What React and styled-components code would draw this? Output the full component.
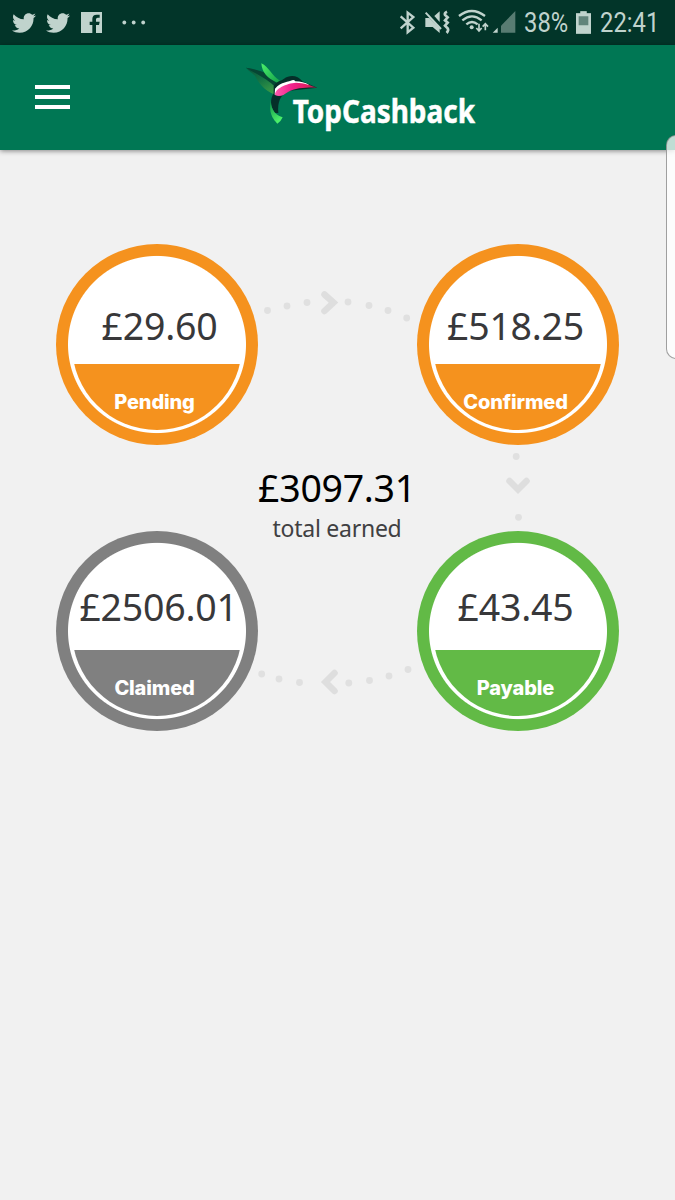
import { FaTwitter } from 'react-icons/fa';
import styled, { createGlobalStyle } from 'styled-components';

const stages = {
  pending: { label: 'Pending', amount: '£29.60', color: '#f5921e' },
  confirmed: { label: 'Confirmed', amount: '£518.25', color: '#f5921e' },
  claimed: { label: 'Claimed', amount: '£2506.01', color: '#808080' },
  payable: { label: 'Payable', amount: '£43.45', color: '#62ba46' },
};

export default function App() {
  return (
    <Screen>
      <GlobalStyle />
      <StatusBar />
      <Header>
        <MenuButton aria-label="Menu">
          <span />
          <span />
          <span />
        </MenuButton>
        <Logo />
      </Header>
      <Overview>
        <Stage {...stages.pending} shift={2.5} drop={-1} />
        <ArrowRight />
        <Stage {...stages.confirmed} shift={-2.5} drop={-1} />

        <span />
        <Total>
          <strong>£3097.31</strong>
          <p>total earned</p>
        </Total>
        <ArrowDown />

        <Stage {...stages.claimed} shift={1.5} drop={-6} />
        <ArrowLeft />
        <Stage {...stages.payable} shift={-2.5} drop={-6} />
      </Overview>
      <EdgeHandle />
    </Screen>
  );
}

function StatusBar() {
  return (
    <StatusWrapper>
      <Notifications>
        <FaTwitter size={24} />
        <FaTwitter size={24} />
        <svg width="21" height="21" viewBox="0 0 63 63" fill="currentColor">
          <path d="M0 0H63V63H45V39H54L56 29H45V22Q45 17 50 17H56V8H47Q34 8 34 21V29H26V39H34V63H0Z" />
        </svg>
        <svg width="24" height="5" viewBox="0 0 24 5" fill="currentColor">
          <circle cx="2.3" cy="2.5" r="1.9" />
          <circle cx="11.7" cy="2.5" r="1.9" />
          <circle cx="21.2" cy="2.5" r="1.9" />
        </svg>
      </Notifications>
      <Indicators>
        <svg width="91" height="45" viewBox="27 0 273 135">
          <g fill="none" stroke="currentColor" strokeWidth="7">
            <path d="M32 49L70 83L53 97V38L70 51L32 85" />
            <path
              d="M171 35Q162 39 165 45L173 52L165 61L173 68L165 77L173 85Q177 91 170 99"
              strokeWidth="8"
            />
            <path d="M107 38L153 87" strokeWidth="6" />
            <path d="M207 48Q245 18 285 48" />
            <path d="M217 61Q246 37 275 61" />
            <path d="M229 73Q246 59 263 73" />
            <path d="M267 71V92M259 84L267 93L275 84" strokeWidth="5" />
            <path d="M286 91V73M278 80L286 71L294 80" strokeWidth="5" />
          </g>
          <g fill="currentColor">
            <path d="M106 54H118L149 84V99L128 81H106Z" />
            <path d="M133 48L149 34V66Z" />
            <circle cx="245" cy="82" r="6" />
          </g>
        </svg>
        <svg width="25" height="45" viewBox="306 0 75 135" fill="currentColor">
          <path d="M308 98L323 83V98Z" />
          <path d="M376 33V98H333V77Z" opacity="0.45" />
        </svg>
        <StatusText width={46}>
          <span>38%</span>
        </StatusText>
        <svg width="15" height="45" viewBox="558 0 45 135" fill="currentColor">
          <path d="M571 34H590V40H603V101H558V40H571Z" opacity="0.5" />
          <path d="M571 34H590V40H603V101H558V40H571ZM566 49V76H595V49Z" fillRule="evenodd" />
        </svg>
        <StatusText width={60}>
          <span>22:41</span>
        </StatusText>
      </Indicators>
    </StatusWrapper>
  );
}

function Logo() {
  return (
    <LogoImage width="250" height="95" viewBox="0 0 750 285">
      <defs>
        <linearGradient id="wing" x1="0" y1="0" x2="0.7" y2="1">
          <stop offset="0" stopColor="#07543c" />
          <stop offset="0.5" stopColor="#137344" />
          <stop offset="1" stopColor="#3a9b46" />
        </linearGradient>
        <linearGradient id="feather" x1="0" y1="0" x2="1" y2="1">
          <stop offset="0" stopColor="#4cf06a" />
          <stop offset="1" stopColor="#12a04a" />
        </linearGradient>
        <linearGradient id="tail" x1="0" y1="0" x2="0.4" y2="1">
          <stop offset="0" stopColor="#0a8a45" />
          <stop offset="1" stopColor="#4cf06a" />
        </linearGradient>
        <linearGradient id="throat" x1="0" y1="0" x2="1" y2="0">
          <stop offset="0" stopColor="#ff5cae" />
          <stop offset="0.4" stopColor="#f0218c" />
          <stop offset="0.75" stopColor="#e01f62" />
          <stop offset="1" stopColor="#93304a" />
        </linearGradient>
      </defs>
      <path d="M33 38C66 46 109 58 132 84L119 119C86 105 70 82 60 62C51 54 41 47 33 38Z" fill="url(#wing)" />
      <path d="M33 38C66 43 108 55 135 79L124 99C98 72 67 59 33 38Z" fill="#064634" />
      <path d="M79 25C102 36 109 61 135 77L126 83C97 69 81 53 79 25Z" fill="url(#feather)" />
      <path
        d="M116 93C124 78 139 78 147 71C163 59 188 59 202 79L247 98L157 108C137 122 127 139 130 174L120 174C105 153 105 133 116 115Z"
        fill="#052f29"
      />
      <path d="M120 101C138 80 163 81 171 76Q177 73 181 79Q205 80 222 89L139 111L119 119Z" fill="#fff" />
      <path
        d="M120 120C119 101 154 85 183 83C207 83 228 92 247 98C220 97 180 98 159 111C145 121 134 127 120 120Z"
        fill="url(#throat)"
      />
      <path d="M108 132C106 154 114 178 143 187Q137 201 127 206C115 192 99 176 108 132Z" fill="url(#tail)" />
      <LogoText x="173" y="205" textLength="547" lengthAdjust="spacingAndGlyphs">
        TopCashback
      </LogoText>
    </LogoImage>
  );
}

function Stage({ label, amount, color, shift, drop }) {
  return (
    <Ring $color={color}>
      <Dial $color={color}>
        <Amount $shift={shift} $drop={drop}>
          {amount}
        </Amount>
        <Label>{label}</Label>
      </Dial>
    </Ring>
  );
}

function Dots({ points }) {
  return points.map(([x, y]) => (
    <circle key={`${x}-${y}`} cx={x} cy={y} r="3.4" fill="#e0e0e0" />
  ));
}

function ArrowRight() {
  return (
    <Trail width="159" height="40" viewBox="258 285 159 40" $top={41}>
      <Dots
        points={[
          [267.5, 310.5],
          [287, 306],
          [307, 302.5],
          [348, 302],
          [369, 305.5],
          [388, 310.5],
          [406.7, 318],
        ]}
      />
      <path d="M324.5 294.5L333.5 302.5L324.5 311" />
    </Trail>
  );
}

function ArrowDown() {
  return (
    <Trail width="202" height="86" viewBox="417 445 202 86" $top={0}>
      <Dots
        points={[
          [516.2, 456.5],
          [518.5, 517.3],
        ]}
      />
      <path d="M509.5 481L518 489.5L526.5 481" />
    </Trail>
  );
}

function ArrowLeft() {
  return (
    <Trail width="159" height="40" viewBox="258 660 159 40" $top={129}>
      <Dots
        points={[
          [261.7, 674],
          [279, 679],
          [299.5, 682.5],
          [348.8, 683],
          [369.5, 680.5],
          [389, 676],
          [408, 669.5],
        ]}
      />
      <path d="M334.5 673L325.5 682L334.5 691" />
    </Trail>
  );
}

function StatusText({ width, children }) {
  return <StatusTextWrapper $width={width}>{children}</StatusTextWrapper>;
}

const GlobalStyle = createGlobalStyle`
  * {
    box-sizing: border-box;
  }
  body {
    margin: 0;
    background: #f1f1f1;
    font-family: 'Noto Sans', sans-serif;
  }
  svg {
    display: block;
    flex-shrink: 0;
  }
`;

const Screen = styled.div`
  position: relative;
  width: 675px;
  height: 1200px;
  overflow: hidden;
  background: #f1f1f1;
`;

const StatusWrapper = styled.div`
  display: flex;
  justify-content: space-between;
  height: 45px;
  padding: 0 15px 0 12px;
  background: #023529;
  color: #c0d3cd;
`;

const Notifications = styled.div`
  display: flex;
  align-items: center;
  gap: 10px;

  svg:nth-child(3) {
    margin-left: 1px;
  }
  svg:nth-child(4) {
    margin-left: 10px;
  }
`;

const Indicators = styled.div`
  display: flex;
  align-items: center;

  svg:nth-child(2) {
    margin: 0 7px 0 2px;
  }
  svg:nth-child(4) {
    margin: 0 9px 0 6px;
  }
`;

const StatusTextWrapper = styled.div`
  width: ${({ $width }) => $width}px;
  font: 400 28px/47px Roboto, sans-serif;
  white-space: nowrap;

  span {
    display: inline-block;
    transform: scaleX(0.85);
    transform-origin: left;
  }
`;

const Header = styled.header`
  display: flex;
  align-items: flex-start;
  gap: 165px;
  height: 105px;
  padding: 10px 35px 0;
  background: #007754;
  box-shadow: 0 1px 5px rgba(0, 0, 0, 0.45);
`;

const MenuButton = styled.button`
  display: flex;
  flex-direction: column;
  gap: 6px;
  width: 35px;
  margin-top: 30px;
  padding: 0;
  border: 0;
  background: none;

  span {
    width: 100%;
    height: 4px;
    background: #fff;
  }
`;

const LogoImage = styled.svg`
  overflow: visible;
`;

const LogoText = styled.text`
  fill: #fff;
  stroke: #fff;
  stroke-width: 1.5;
  font: 700 98px 'Noto Sans', sans-serif;
`;

const Overview = styled.main`
  display: grid;
  grid-template: 201px 86px 200px / 202px 159px 202px;
  padding: 94px 56px 0;
`;

const Ring = styled.section`
  display: flex;
  align-items: center;
  justify-content: center;
  background: radial-gradient(
    closest-side,
    #fff 88.5px,
    ${({ $color }) => $color} 89.5px
  );
  border-radius: 50%;
`;

const Dial = styled.div`
  display: flex;
  flex-direction: column;
  align-items: center;
  width: 170px;
  height: 170px;
  border-radius: 50%;
  background: linear-gradient(#fff 104px, ${({ $color }) => $color} 104px);
`;

const Amount = styled.div`
  height: 104px;
  padding-top: 42px;
  color: #38383a;
  font-size: 37.5px;
  line-height: 50px;
  letter-spacing: -0.25px;
  white-space: nowrap;
  transform: translate(${({ $shift, $drop }) => `${$shift}px, ${$drop}px`});
`;

const Label = styled.h2`
  margin: 23px 5px 0 0;
  color: #fff;
  font: 800 20px/30px Inter, sans-serif;
  letter-spacing: -0.15px;
`;

const Total = styled.div`
  display: flex;
  flex-direction: column;
  align-items: center;
  padding: 18px 1px 0 0;
  white-space: nowrap;

  strong {
    color: #000;
    font-size: 37.5px;
    font-weight: 400;
    line-height: 50px;
    letter-spacing: -0.3px;
  }
  p {
    margin: 1px 0 0;
    color: #404042;
    font-size: 23px;
    line-height: 28px;
    letter-spacing: -0.25px;
  }
`;

const Trail = styled.svg`
  margin-top: ${({ $top }) => $top}px;

  path {
    fill: none;
    stroke: #dedede;
    stroke-width: 6.5;
    stroke-linecap: round;
  }
`;

const EdgeHandle = styled.aside`
  position: absolute;
  top: 135px;
  right: -12px;
  width: 21px;
  height: 224px;
  border: 1px solid rgba(120, 120, 120, 0.7);
  border-radius: 10px;
  background: rgba(255, 255, 255, 0.75);
`;
